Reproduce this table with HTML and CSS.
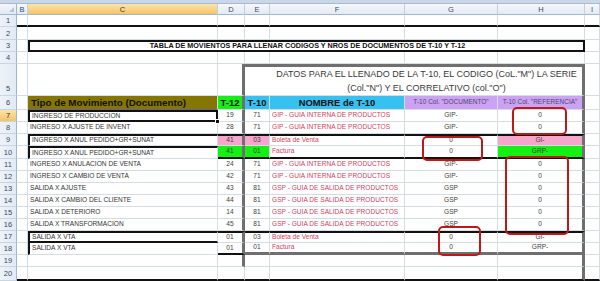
FILE: index.html
```html
<!DOCTYPE html>
<html>
<head>
<meta charset="utf-8">
<title>Tabla de movimientos</title>
<link rel="stylesheet" href="styles.css">
</head>
<body>
<div class="app">
  <div class="strip"></div>
  <div class="sheet">
    <div class="corner"><span class="tri"></span></div>
    <div class="ch">B</div><div class="ch sel">C</div><div class="ch">D</div><div class="ch">E</div><div class="ch">F</div><div class="ch">G</div><div class="ch">H</div><div class="ch">I</div>

    <div class="rh">1</div>
    <div class="c bbk"></div><div class="c bbk"></div><div class="c bbk"></div><div class="c bbk"></div><div class="c bbk"></div><div class="c bbk"></div><div class="c bbk"></div><div class="c bbk"></div>

    <div class="rh">2</div>
    <div class="c"></div><div class="c"></div><div class="c"></div><div class="c"></div><div class="c"></div><div class="c"></div><div class="c"></div><div class="c"></div>

    <div class="rh">3</div>
    <div class="c"></div>
    <div class="c title">TABLA DE MOVIENTOS PARA LLENAR CODIGOS Y NROS DE DOCUMENTOS DE T-10 Y T-12</div>
    <div class="c"></div>

    <div class="rh">4</div>
    <div class="c"></div><div class="c"></div><div class="c"></div><div class="c"></div><div class="c"></div><div class="c"></div><div class="c"></div><div class="c"></div>

    <div class="rh rh5">5</div>
    <div class="c"></div><div class="c"></div><div class="c gR"></div>
    <div class="c box">
      <span>DATOS PARA EL LLENADO DE LA T-10, EL CODIGO (CoL."M") LA SERIE</span>
      <span>(Col."N") Y EL CORRELATIVO (col."O")</span>
    </div>
    <div class="c"></div>

    <div class="rh">6</div>
    <div class="c"></div>
    <div class="c hd olive">Tipo de Movimiento (Documento)</div>
    <div class="c hd n green gR">T-12</div>
    <div class="c hd n blue">T-10</div>
    <div class="c hd n blue">NOMBRE de T-10</div>
    <div class="c hp n purple">T-10 Col. "DOCUMENTO"</div>
    <div class="c hp n purple gR">T-10 Col. "REFERENCIA"</div>
    <div class="c"></div>

    <div class="rh sel">7</div>
    <div class="c"></div>
    <div class="c act">INGRESO DE PRODUCCION</div>
    <div class="c n gR">19</div><div class="c n">71</div><div class="c red">GIP - GUIA INTERNA DE PRODUCTOS</div><div class="c n">GIP-</div><div class="c n gR">0</div><div class="c"></div>

    <div class="rh">8</div>
    <div class="c"></div>
    <div class="c">INGRESO X AJUSTE DE INVENT</div>
    <div class="c n gR">28</div><div class="c n">71</div><div class="c red">GIP - GUIA INTERNA DE PRODUCTOS</div><div class="c n">GIP-</div><div class="c n gR">0</div><div class="c"></div>

    <div class="rh">9</div>
    <div class="c"></div>
    <div class="c btk blk">INGRESO X ANUL PEDIDO+GR+SUNAT</div>
    <div class="c n gR btk pink">41</div><div class="c n btk pink">03</div><div class="c red btk">Boleta de Venta</div><div class="c n btk">0</div><div class="c n gR btk pink">GI-</div><div class="c"></div>

    <div class="rh">10</div>
    <div class="c"></div>
    <div class="c btk blk">INGRESO X ANUL PEDIDO+GR+SUNAT</div>
    <div class="c n gR bbk green">41</div><div class="c n bbk green">01</div><div class="c red bbk">Factura</div><div class="c n bbk">0</div><div class="c n gR bbk green">GRP-</div><div class="c"></div>

    <div class="rh">11</div>
    <div class="c"></div>
    <div class="c">INGRESO X ANULACION DE VENTA</div>
    <div class="c n gR">24</div><div class="c n">71</div><div class="c red">GIP - GUIA INTERNA DE PRODUCTOS</div><div class="c n">GIP-</div><div class="c n gR">0</div><div class="c"></div>

    <div class="rh">12</div>
    <div class="c"></div>
    <div class="c">INGRESO X CAMBIO DE VENTA</div>
    <div class="c n gR">42</div><div class="c n">71</div><div class="c red">GIP - GUIA INTERNA DE PRODUCTOS</div><div class="c n">GIP-</div><div class="c n gR">0</div><div class="c"></div>

    <div class="rh">13</div>
    <div class="c"></div>
    <div class="c">SALIDA X AJUSTE</div>
    <div class="c n gR">43</div><div class="c n">81</div><div class="c red">GSP - GUIA DE SALIDA DE PRODUCTOS</div><div class="c n">GSP</div><div class="c n gR">0</div><div class="c"></div>

    <div class="rh">14</div>
    <div class="c"></div>
    <div class="c">SALIDA X CAMBIO DEL CLIENTE</div>
    <div class="c n gR">44</div><div class="c n">81</div><div class="c red">GSP - GUIA DE SALIDA DE PRODUCTOS</div><div class="c n">GSP</div><div class="c n gR">0</div><div class="c"></div>

    <div class="rh">15</div>
    <div class="c"></div>
    <div class="c">SALIDA X DETERIORO</div>
    <div class="c n gR">14</div><div class="c n">81</div><div class="c red">GSP - GUIA DE SALIDA DE PRODUCTOS</div><div class="c n">GSP</div><div class="c n gR">0</div><div class="c"></div>

    <div class="rh">16</div>
    <div class="c"></div>
    <div class="c">SALIDA X TRANSFORMACION</div>
    <div class="c n gR">45</div><div class="c n">81</div><div class="c red">GSP - GUIA DE SALIDA DE PRODUCTOS</div><div class="c n">GSP</div><div class="c n gR">0</div><div class="c"></div>

    <div class="rh">17</div>
    <div class="c"></div>
    <div class="c btk blk bbk">SALIDA X VTA</div>
    <div class="c n gR btk">01</div><div class="c n btk">03</div><div class="c red btk">Boleta de Venta</div><div class="c n btk">0</div><div class="c n gR btk">GI-</div><div class="c"></div>

    <div class="rh">18</div>
    <div class="c"></div>
    <div class="c blk">SALIDA X VTA</div>
    <div class="c n gR bbk">01</div><div class="c n gB">01</div><div class="c red gB">Factura</div><div class="c n gB">0</div><div class="c n gR gB">GRP-</div><div class="c"></div>

    <div class="rh">19</div>
    <div class="c"></div><div class="c"></div><div class="c gR"></div><div class="c"></div><div class="c"></div><div class="c"></div><div class="c gR"></div><div class="c"></div>

    <div class="rh">20</div>
    <div class="c bbk"></div><div class="c bbk"></div><div class="c bbk"></div><div class="c bbk"></div><div class="c bbk"></div><div class="c bbk"></div><div class="c bbk gR"></div><div class="c bbk"></div>
  </div>

  <div class="handle"></div>
  <div class="mark m1"></div>
  <div class="mark m2"></div>
  <div class="mark m3"></div>
  <div class="mark m4"></div>
</div>
</body>
</html>
```

FILE: styles.css
```css
* { box-sizing: border-box; margin: 0; padding: 0; }
body { margin: 0; background: #fff; font-family: "Liberation Sans", Arial, sans-serif; }

.app { position: relative; width: 600px; height: 281px; overflow: hidden; background: #fff; }

.strip { height: 4px; background: #c9d7e8; border-bottom: 1px solid #a7bad2; }

.sheet {
  display: grid;
  grid-template-columns: 17px 11px 190px 27px 25px 135px 93px 87px 15px;
  grid-template-rows: 11px 12px 13px 12px 12px 32px 14px 12px 12px 12px 13px 12px 12px 12px 12px 12px 12px 12px 12px 12px 14px;
}

/* headers */
.corner {
  position: relative;
  background: linear-gradient(#f4f7fb, #e2e9f3);
  border-right: 1px solid #9eb6ce;
  border-bottom: 1px solid #9eb6ce;
}
.tri {
  position: absolute; right: 2px; bottom: 2px;
  width: 0; height: 0;
  border-left: 5px solid transparent;
  border-bottom: 5px solid #b7c4d3;
}
.ch {
  background: linear-gradient(#f5f8fc, #e3eaf4);
  border-right: 1px solid #c2cfdf;
  border-bottom: 1px solid #9eb6ce;
  font-size: 7.5px; color: #3a4a63;
  display: flex; align-items: center; justify-content: center;
}
.rh {
  background: linear-gradient(90deg, #eef3f9, #e3eaf4);
  border-right: 1px solid #9eb6ce;
  border-bottom: 1px solid #c8d5e5;
  font-size: 7.5px; color: #3a4a63;
  display: flex; align-items: center; justify-content: center;
}
.rh5 { align-items: flex-end; padding-bottom: 2px; }
.ch.sel, .rh.sel { background: linear-gradient(#fbe3ab, #f5c469); color: #3a3a2a; }

/* cells */
.c {
  border-right: 1px solid #d6dce4;
  border-bottom: 1px solid #d6dce4;
  font-size: 6.6px; color: #333;
  display: flex; align-items: center;
  white-space: nowrap; overflow: hidden;
  padding-left: 2px; line-height: 1;
}
.n { justify-content: center; padding-left: 0; color: #3d3d3d; }
.red { color: #cf3f5e; }

.title {
  grid-column: span 6;
  border: 2px solid #111;
  justify-content: center;
  font-weight: bold; font-size: 7.2px; color: #111;
}
.box {
  grid-column: span 4;
  border-top: 3px solid #6f6f6f;
  border-right: 3px solid #6f6f6f;
  flex-direction: column; justify-content: flex-end; align-items: center;
  font-size: 9px; color: #3a3a3a; line-height: 14px;
  padding: 0 0 0 26px;
}

.hd { font-weight: bold; font-size: 9.4px; color: #111; }
.olive.hd { font-size: 9.8px; }
.hp { font-size: 6.5px; color: #4f4768; }
.olive { background: #857600; color: #111; padding-left: 3px; border-bottom: 1px solid #6b5fa0; }
.green { background: #14f014; }
.blue { background: #36c1f0; }
.purple { background: #cba2f4; }
.pink { background: #f7a6cb; }

/* borders */
.bbk { border-bottom: 2px solid #111; }
.btk { border-top: 2px solid #111; }
.blk { border-left: 2px solid #111; }
.gR { border-right: 3px solid #6f6f6f; }
.gB { border-bottom: 3px solid #6f6f6f; }
.act { border: 2px solid #111; }

/* overlays */
.handle {
  position: absolute; left: 215px; top: 119px;
  width: 5px; height: 5px;
  background: #111; border: 1px solid #fff;
}
.mark {
  position: absolute;
  border: 2px solid #c01818;
  border-radius: 5px;
}
.m1 { left: 512px; top: 107px; width: 55px; height: 28px; }
.m2 { left: 422px; top: 136px; width: 61px; height: 25px; }
.m3 { left: 505px; top: 156px; width: 64px; height: 79px; }
.m4 { left: 438px; top: 226px; width: 43px; height: 30px; }
```
